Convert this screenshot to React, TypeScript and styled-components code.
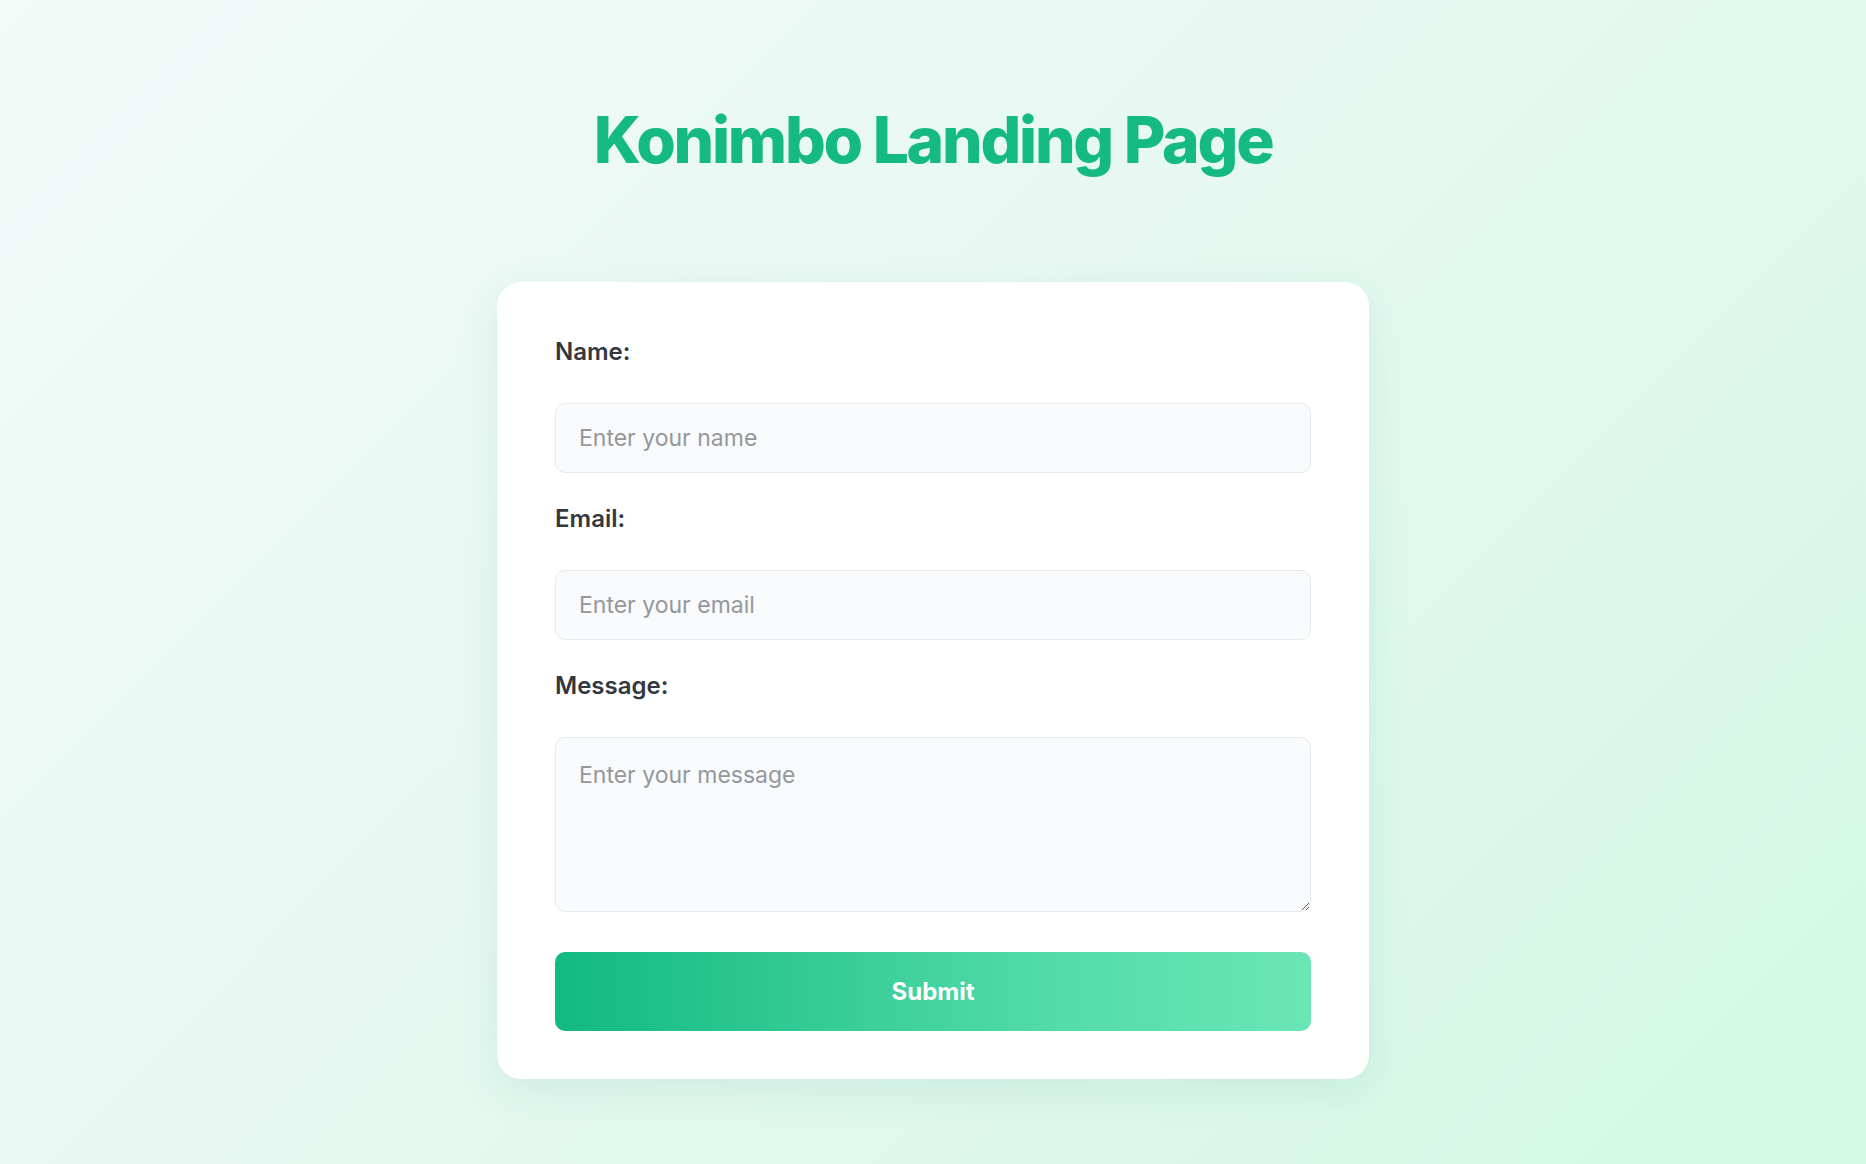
import React from 'react';
import styled, { createGlobalStyle } from 'styled-components';

const green = '#15b982';
const labelGray = '#333840';
const fieldBg = '#f8fafb';
const fieldBorder = '#e6eaed';

const GlobalStyle = createGlobalStyle`
  html, body {
    margin: 0;
    padding: 0;
  }
  body {
    font-family: Inter, "Noto Sans", "Liberation Sans", sans-serif;
  }
  * {
    box-sizing: border-box;
  }
`;

const Page = styled.div`
  min-height: 100vh;
  background: linear-gradient(135deg, #f3faf9 0%, #e6f8f1 45%, #d2f8e4 100%);
  display: flex;
  flex-direction: column;
  align-items: center;
  padding-top: 102px;
  padding-bottom: 80px;
`;

const Title = styled.h1`
  margin: 0 0 103px;
  font-size: 64px;
  line-height: 1.2;
  font-weight: 800;
  letter-spacing: -0.035em;
  color: ${green};
`;

const Card = styled.form`
  width: 872px;
  background: #ffffff;
  border-radius: 24px;
  padding: 53px 58px 48px;
  box-shadow: 0 12px 40px rgba(40, 130, 120, 0.1);
  display: flex;
  flex-direction: column;
`;

const Label = styled.label`
  display: block;
  font-size: 24px;
  line-height: 33px;
  font-weight: 600;
  color: ${labelGray};
  margin-bottom: 35px;
`;

const Input = styled.input`
  display: block;
  width: 100%;
  height: 70px;
  padding: 0 23px;
  margin-bottom: 29px;
  font-family: inherit;
  font-size: 23px;
  color: #333;
  background: ${fieldBg};
  border: 1px solid ${fieldBorder};
  border-radius: 10px;
  outline: none;
  &::placeholder {
    color: #94989c;
  }
`;

const TextArea = styled.textarea`
  display: block;
  width: 100%;
  height: 175px;
  padding: 23px 23px;
  margin: 0 0 40px;
  font-family: inherit;
  font-size: 23px;
  line-height: 1.3;
  color: #333;
  background: ${fieldBg};
  border: 1px solid ${fieldBorder};
  border-radius: 10px;
  outline: none;
  resize: vertical;
  &::placeholder {
    color: #94989c;
  }
`;

const SubmitButton = styled.button`
  display: block;
  width: 100%;
  height: 79px;
  border: none;
  border-radius: 10px;
  background: linear-gradient(90deg, #12b981 0%, #30c993 30%, #52dba9 65%, #6be6b6 100%);
  color: #ffffff;
  font-family: inherit;
  font-size: 24px;
  font-weight: 700;
  cursor: pointer;
`;

const App = () => (
  <Page>
    <GlobalStyle />
    <Title>Konimbo Landing Page</Title>
    <Card onSubmit={e => e.preventDefault()}>
      <Label htmlFor="name">Name:</Label>
      <Input id="name" type="text" placeholder="Enter your name" />
      <Label htmlFor="email">Email:</Label>
      <Input id="email" type="email" placeholder="Enter your email" />
      <Label htmlFor="message">Message:</Label>
      <TextArea id="message" placeholder="Enter your message" />
      <SubmitButton type="submit">Submit</SubmitButton>
    </Card>
  </Page>
);

export default App;
